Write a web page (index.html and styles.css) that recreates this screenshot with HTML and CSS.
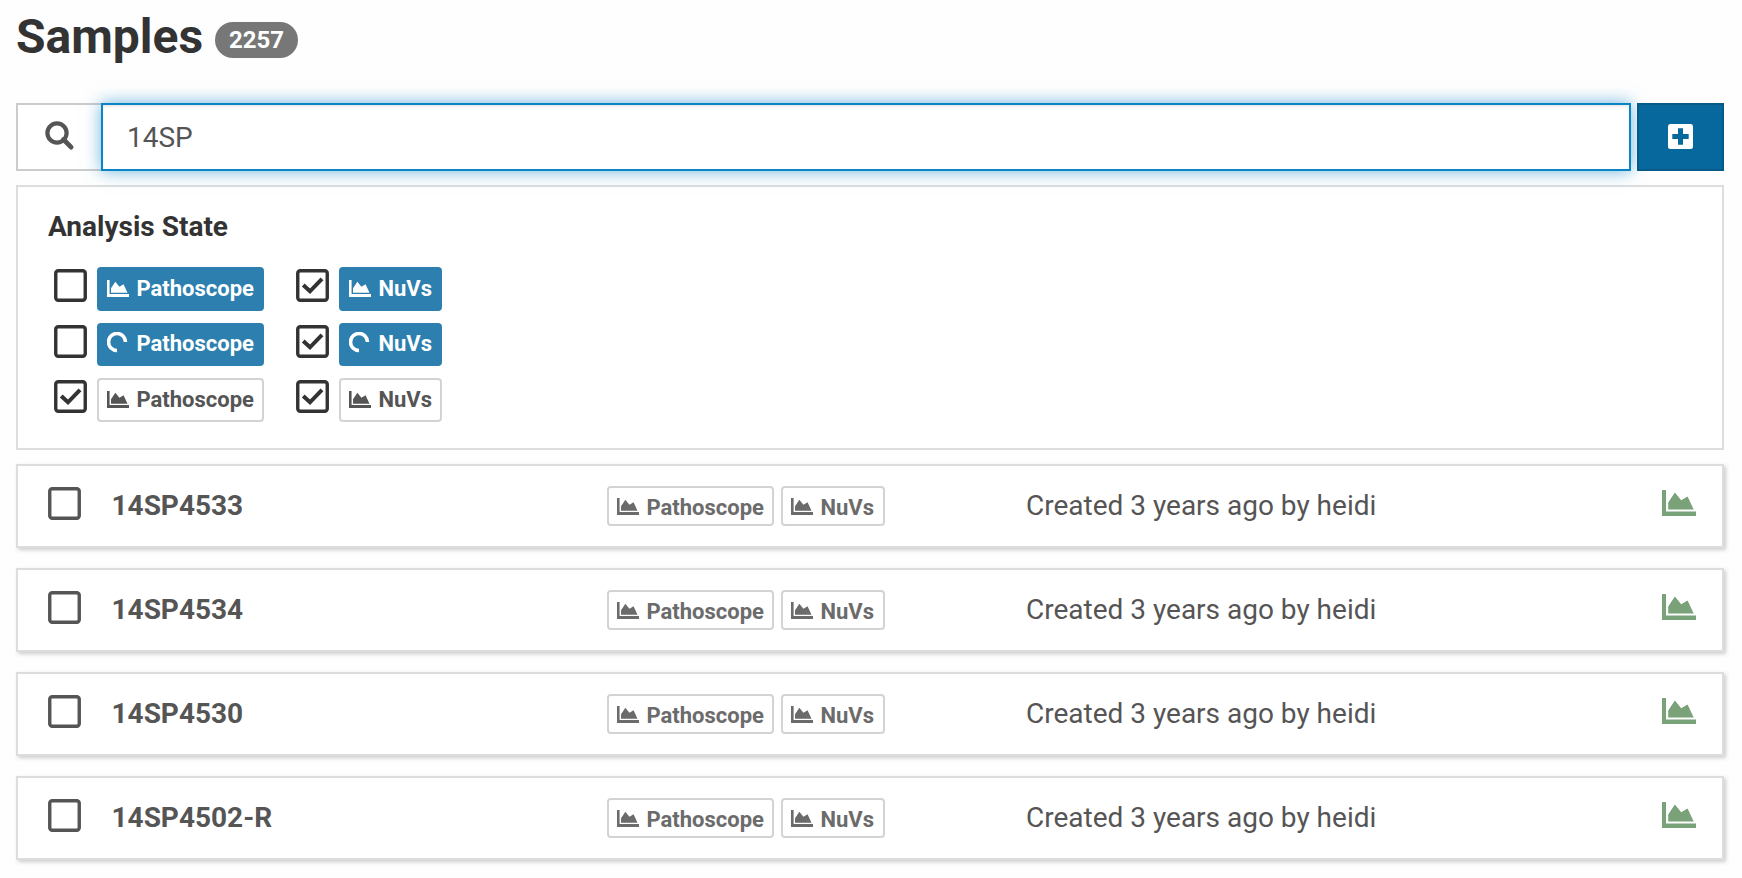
FILE: index.html
```
<!DOCTYPE html>
<html lang="en">
<head>
<meta charset="utf-8">
<title>Samples</title>
<link rel="stylesheet" href="styles.css">
</head>
<body>
<svg class="defs" width="0" height="0" aria-hidden="true">
  <symbol id="chart" viewBox="0 0 34 26">
    <path d="M0 0h4v21.5h30V26H0z"/>
    <path d="M6.2 19.6V12.500L12.900 2.600 19.200 10.300 25.600 6.400 31.700 19.600z"/>
  </symbol>
  <symbol id="spinner" viewBox="0 0 22 22">
    <path d="M10 18.500A8.500 8.500 0 1 1 18.500 10" fill="none" stroke="currentColor" stroke-width="3.600"/>
  </symbol>
  <symbol id="box" viewBox="0 0 33 33">
    <rect x="1.750" y="1.750" width="29.500" height="29.500" rx="2.500" fill="none" stroke="currentColor" stroke-width="3.400"/>
  </symbol>
  <symbol id="box-checked" viewBox="0 0 33 33">
    <rect x="1.750" y="1.750" width="29.500" height="29.500" rx="2.500" fill="none" stroke="currentColor" stroke-width="3.400"/>
    <path d="M7.200 16l6.800 6.300L26 9.800" fill="none" stroke="currentColor" stroke-width="4"/>
  </symbol>
</svg>
<main class="page">
  <h1 class="title">Samples <span class="badge">2257</span></h1>

  <div class="toolbar">
    <div class="search">
      <span class="addon"><svg width="30" height="30" viewBox="0 0 30 30"><circle cx="12" cy="12" r="9.600" fill="none" stroke="currentColor" stroke-width="4.200"/><path d="M18.500 18.500l7.600 7.600" stroke="currentColor" stroke-width="4.800" stroke-linecap="round"/></svg></span>
      <div class="field">14SP</div>
    </div>
    <button class="create" aria-label="Create"><svg width="25" height="25" viewBox="0 0 25 25"><rect width="25" height="25" rx="2.500" fill="#fff"/><path d="M4.300 12.500h16.400M12.500 4.300v16.400" stroke="#07689d" stroke-width="5"/></svg></button>
  </div>

  <section class="filters">
    <h2 class="filters-title">Analysis State</h2>
    <div class="options">
      <div class="option"><svg class="check"><use href="#box"/></svg><span class="tag wide solid"><svg class="icon"><use href="#chart"/></svg>Pathoscope</span></div>
      <div class="option"><svg class="check"><use href="#box-checked"/></svg><span class="tag solid"><svg class="icon"><use href="#chart"/></svg>NuVs</span></div>
      <div class="option"><svg class="check"><use href="#box"/></svg><span class="tag wide solid busy"><svg class="icon spin"><use href="#spinner"/></svg>Pathoscope</span></div>
      <div class="option"><svg class="check"><use href="#box-checked"/></svg><span class="tag solid busy"><svg class="icon spin"><use href="#spinner"/></svg>NuVs</span></div>
      <div class="option"><svg class="check"><use href="#box-checked"/></svg><span class="tag wide"><svg class="icon"><use href="#chart"/></svg>Pathoscope</span></div>
      <div class="option"><svg class="check"><use href="#box-checked"/></svg><span class="tag"><svg class="icon"><use href="#chart"/></svg>NuVs</span></div>
    </div>
  </section>

  <div class="list">
    <article class="sample"><svg class="check"><use href="#box"/></svg><strong class="name">14SP4533</strong><div class="tags"><span class="tag wide"><svg class="icon"><use href="#chart"/></svg>Pathoscope</span><span class="tag"><svg class="icon"><use href="#chart"/></svg>NuVs</span></div><span class="created">Created 3 years ago by heidi</span><svg class="analyze"><use href="#chart"/></svg></article>
    <article class="sample"><svg class="check"><use href="#box"/></svg><strong class="name">14SP4534</strong><div class="tags"><span class="tag wide"><svg class="icon"><use href="#chart"/></svg>Pathoscope</span><span class="tag"><svg class="icon"><use href="#chart"/></svg>NuVs</span></div><span class="created">Created 3 years ago by heidi</span><svg class="analyze"><use href="#chart"/></svg></article>
    <article class="sample"><svg class="check"><use href="#box"/></svg><strong class="name">14SP4530</strong><div class="tags"><span class="tag wide"><svg class="icon"><use href="#chart"/></svg>Pathoscope</span><span class="tag"><svg class="icon"><use href="#chart"/></svg>NuVs</span></div><span class="created">Created 3 years ago by heidi</span><svg class="analyze"><use href="#chart"/></svg></article>
    <article class="sample"><svg class="check"><use href="#box"/></svg><strong class="name">14SP4502-R</strong><div class="tags"><span class="tag wide"><svg class="icon"><use href="#chart"/></svg>Pathoscope</span><span class="tag"><svg class="icon"><use href="#chart"/></svg>NuVs</span></div><span class="created">Created 3 years ago by heidi</span><svg class="analyze"><use href="#chart"/></svg></article>
  </div>
</main>
</body>
</html>
```
FILE: styles.css
```
* { box-sizing: border-box; }
body {
  margin: 0;
  background: #fefefe;
  color: #333;
  font-family: Roboto, sans-serif;
  font-size: 28px;
}
.defs { display: block; height: 0; }
.page {
  width: 1708px;
  min-height: 878px;
  margin-left: 16px;
}
.title {
  display: flex;
  align-items: flex-start;
  gap: 12px;
  height: 103px;
  margin: 0;
  padding-top: 9px;
  font-size: 48px;
  line-height: 56px;
  font-weight: 700;
}
.badge {
  width: 83px;
  height: 36px;
  margin-top: 13px;
  border-radius: 18px;
  background: #777;
  color: #fff;
  font-size: 24px;
  line-height: 36px;
  text-align: center;
}
.toolbar {
  display: flex;
  gap: 6px;
  height: 68px;
}
.search {
  display: flex;
  flex: 1;
  color: #555;
}
.addon {
  display: flex;
  width: 85px;
  padding: 16px 0 0 27px;
  border: 2px solid #ccc;
  border-right: 0;
  background: #fff;
}
.field {
  flex: 1;
  padding-left: 24px;
  border: 2px solid #0b84c6;
  background: #fff;
  line-height: 66px;
  box-shadow: inset 0 2px 2px rgba(0, 0, 0, .075), 0 0 16px rgba(11, 132, 198, .6);
}
.create {
  display: flex;
  align-items: center;
  justify-content: center;
  width: 87px;
  padding: 0 0 2px;
  border: 2px solid #065a88;
  background: #07689d;
}
.filters {
  height: 265px;
  margin-top: 14px;
  padding: 23px 30px;
  border: 2px solid #ddd;
  background: #fff;
}
.filters-title {
  margin: 0;
  font-size: 28px;
  line-height: 34px;
  font-weight: 700;
}
.options {
  display: grid;
  grid-template-columns: 242px 146px;
  grid-template-rows: 44px 43px 44px;
  row-gap: 12px;
  margin: 23px 0 0 6px;
}
.option {
  display: flex;
  gap: 10px;
}
.check {
  width: 33px;
  height: 33px;
  flex: none;
}
.option .check { margin-top: 2.300px; }
.tag {
  display: flex;
  align-items: center;
  width: 104px;
  height: 40px;
  padding: 3px 0 0 7.500px;
  border: 2px solid #d3d3d3;
  border-radius: 4px;
  background: #fff;
  color: #6b6b6b;
  font-size: 22px;
  line-height: 24px;
  font-weight: 700;
  white-space: nowrap;
}
.wide { width: 167px; }
.option .tag {
  width: 103px;
  height: 100%;
  padding-top: 0;
  color: #555;
}
.option .wide { width: 167px; }
.option .solid {
  border-color: #2c7fae;
  background: #2c7fae;
  color: #fff;
}
.option .busy { padding-bottom: 1px; }
.icon {
  width: 22px;
  height: 17px;
  margin: 0 8px 2px 0;
  flex: none;
  fill: currentColor;
}
.option .icon { margin-bottom: 2px; }
.option .spin {
  height: 22px;
  margin-bottom: 3px;
}
.list {
  display: grid;
  gap: 20px;
  margin-top: 14px;
}
.sample {
  display: grid;
  grid-template-columns: 63.500px 495.500px 419px 1fr 34px;
  align-items: center;
  height: 84px;
  padding: 0 26px 0 30px;
  border: 2px solid #ddd;
  background: #fff;
  box-shadow: 2px 2px 4px rgba(0, 0, 0, .2);
  color: #555;
}
.sample .check { margin-bottom: 6px; }
.tags {
  display: flex;
  gap: 7px;
}
.name, .created { margin-bottom: 2px; }
.name { font-weight: 700; }
.analyze {
  width: 34px;
  height: 26px;
  margin-bottom: 6px;
  fill: #79a279;
}
```
